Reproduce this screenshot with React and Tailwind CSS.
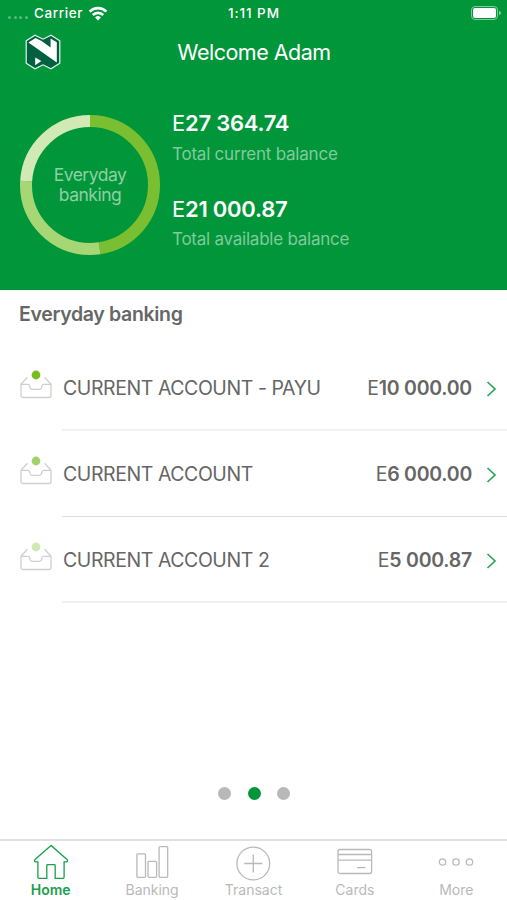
const accounts = [
  { name: "CURRENT ACCOUNT - PAYU", amount: "10 000.00", dot: "#78be20", line: "border-[#f2f2f2] border-b-2 pt-[3px]" },
  { name: "CURRENT ACCOUNT", amount: "6 000.00", dot: "#a1d16c", line: "border-[#dedede] border-b pt-[2px]" },
  { name: "CURRENT ACCOUNT 2", amount: "5 000.87", dot: "#d0e8b2", line: "border-[#f0f0f0] border-b-2 pt-[3px]" },
];

const shares = [
  { color: "#7abf31", start: 0, size: 47.6 },
  { color: "#a7d675", start: 47.6, size: 28.4 },
  { color: "#d1e9b5", start: 76, size: 24 },
];

function Logo() {
  return (
    <svg className="h-9 w-9" viewBox="0 0 36 36" fill="none">
      <path d="M1.2 6.8 10 1.2l8 4 8-4 8.8 5.6v22.4L26 34.8l-8-4-8 4-8.8-5.6Z" fill="#00603f" stroke="#e9f6ee" strokeWidth="1.2" />
      <path d="M3.4 8.4 10.6 4l6 3 9 6.4V4.4l6.2 3.8v20.2L3.4 8.4Z" fill="#fff" />
      <path d="M10.2 23.4 16.4 27l-6.2 4.3Z" fill="#fff" />
    </svg>
  );
}

function Donut() {
  return (
    <div className="relative h-[140px] w-[140px]">
      <svg className="h-full w-full -rotate-90" viewBox="0 0 140 140" fill="none">
        {shares.map((s) => (
          <circle
            key={s.color}
            cx="70"
            cy="70"
            r="64"
            stroke={s.color}
            strokeWidth="12"
            pathLength="100"
            strokeDasharray={`${s.size} ${100 - s.size}`}
            strokeDashoffset={-s.start}
          />
        ))}
      </svg>
      <div className="absolute inset-0 flex items-center justify-center text-center text-[17.5px] leading-[20px] tracking-[-0.5px] text-[#8fd0a5]">
        <span>
          Everyday
          <br />
          banking
        </span>
      </div>
    </div>
  );
}

function TrayIcon({ dot }) {
  return (
    <svg className="h-[30px] w-8" viewBox="0 0 32 30" fill="none">
      <g stroke="#cfcfcf" strokeWidth="1.3" strokeLinejoin="round">
        <path d="M1 15.3h7.2c1.3 0 1.3.5 1.6 2l.3 1.4c.3 1.2.8 1.6 1.9 1.6h7.6c1.1 0 1.6-.4 1.9-1.6l.3-1.4c.3-1.5.5-2 1.6-2H31V26.5a2 2 0 0 1-2 2H3a2 2 0 0 1-2-2Z" />
        <path d="m1 15.3 6.4-7M31 15.3l-6.4-7" />
      </g>
      <circle cx="16" cy="6" r="4.4" fill={dot} />
    </svg>
  );
}

const tabs = [
  {
    label: "Home",
    active: true,
    icon: (
      <path d="M18 1.4 2 15.6c-.9.8-.6 2.3.5 2.3h2.4v15.4c0 .7.4 1 1 1h7.9V21.4c0-.5.2-.8.8-.8h6.8c.6 0 .8.3.8.8v12.9h7.9c.6 0 1-.3 1-1V17.9h2.4c1.1 0 1.4-1.5.5-2.3Z" />
    ),
  },
  {
    label: "Banking",
    icon: (
      <>
        <rect x="2.9" y="9.8" width="8.6" height="23.5" rx="1" />
        <rect x="14" y="17.3" width="8.6" height="16" rx="1" />
        <rect x="25.1" y="2.6" width="8.6" height="30.7" rx="1" />
      </>
    ),
  },
  {
    label: "Transact",
    icon: (
      <>
        <circle cx="18.3" cy="19.5" r="16.4" />
        <path d="M9.2 19.5h18.2M18.3 10.4v18.2" />
      </>
    ),
  },
  {
    label: "Cards",
    icon: (
      <>
        <rect x="1" y="5.5" width="33.6" height="24" rx="2" />
        <path d="M1 10.5h33.6M1 16.2h33.6M20.2 23.6h8.3" />
      </>
    ),
  },
  {
    label: "More",
    icon: (
      <>
        <circle cx="4.5" cy="18" r="3.2" />
        <circle cx="18" cy="18" r="3.2" />
        <circle cx="31.5" cy="18" r="3.2" />
      </>
    ),
  },
];

export default function App() {
  return (
    <div className="flex h-[900px] w-[507px] flex-col overflow-hidden bg-white font-['Inter','Liberation_Sans',sans-serif] text-[#666]">
      <header className="h-[290px] shrink-0 bg-[#009639] text-white">
        {/* Status bar */}
        <div className="grid h-[26px] grid-cols-3 items-center text-[13.5px] font-medium">
          <div className="flex items-center pl-2">
            <div className="flex w-[26px] gap-[2.5px] pt-2">
              <i className="h-[3px] w-[3px] rounded-full bg-[#58ba7b]" />
              <i className="h-[3px] w-[3px] rounded-full bg-[#58ba7b]" />
              <i className="h-[3px] w-[3px] rounded-full bg-[#58ba7b]" />
              <i className="h-[3px] w-[3px] rounded-full bg-[#58ba7b]" />
            </div>
            <span className="tracking-[0.6px]">Carrier</span>
            <svg className="ml-[5px] h-[15px] w-[20px]" viewBox="0 0 20 15" fill="none" stroke="#fff" strokeWidth="2.6">
              <path d="M1.6 5.6a12 12 0 0 1 16.8 0M4.8 9a7.4 7.4 0 0 1 10.4 0" />
              <path d="m10 14.4-2.9-2.9a4.1 4.1 0 0 1 5.8 0Z" fill="#fff" stroke="none" />
            </svg>
          </div>
          <span className="pl-px text-center tracking-[0.9px]">1:11 PM</span>
          <div className="flex items-center justify-end gap-px pr-[6px]">
            <div className="h-[14px] w-[27px] rounded-[4px] border border-[#7fca9b] p-px">
              <div className="h-full rounded-[2px] bg-white" />
            </div>
            <i className="h-1 w-[2px] rounded-r bg-[#7fca9b]" />
          </div>
        </div>

        <div className="grid h-[52px] grid-cols-[1fr_auto_1fr] items-center">
          <div className="pl-[24.5px]">
            <Logo />
          </div>
          <h1 className="pl-px text-[21.5px] tracking-[-0.5px]">Welcome Adam</h1>
        </div>

        <div className="flex gap-[12px] pt-[37px] pl-5">
          <Donut />
          <div className="-mt-[7px]">
            <p className="text-[22px] leading-[31px] font-semibold tracking-[-0.25px]"><span className="font-normal">E</span>27 364.74</p>
            <p className="pt-px text-[17px] leading-7 tracking-[-0.22px] text-[#80cb9c]">Total current balance</p>
            <p className="mt-[26px] text-[22px] leading-[31px] font-semibold tracking-[-0.25px]"><span className="font-normal">E</span>21 000.87</p>
            <p className="text-[17px] leading-7 tracking-[-0.24px] text-[#80cb9c]">Total available balance</p>
          </div>
        </div>
      </header>

      <main className="flex flex-1 flex-col">
        <h2 className="h-[55px] pt-[10px] pl-[19px] text-[19.5px] leading-7 font-semibold tracking-[-0.33px]">Everyday banking</h2>

        {accounts.map((a) => (
          <div key={a.name} className="flex h-[86px] pl-5">
            <div className="w-[42px] pt-6">
              <TrayIcon dot={a.dot} />
            </div>
            <div className={`flex flex-1 items-center pr-[10px] pl-px text-[19.5px] ${a.line}`}>
              <span className="flex-1 tracking-[-0.43px]">{a.name}</span>
              <span className="font-semibold tracking-[-0.25px]"><span className="font-normal">E</span>{a.amount}</span>
              <svg className="ml-[14px] h-4 w-[11px]" viewBox="0 0 11 16" fill="none" stroke="#27a659" strokeWidth="1.7">
                <path d="m1.5 1 7.5 7-7.5 7" />
              </svg>
            </div>
          </div>
        ))}

        <div className="mt-auto mb-[39.5px] flex justify-center gap-[16.5px] pl-px">
          <i className="h-[13px] w-[13px] rounded-full bg-[#b8b8b8]" />
          <i className="h-[13px] w-[13px] rounded-full bg-[#009639]" />
          <i className="h-[13px] w-[13px] rounded-full bg-[#b8b8b8]" />
        </div>
      </main>

      <nav className="grid h-[61px] shrink-0 grid-cols-5 border-t-2 border-[#e0e0e0]">
        {tabs.map((t) => (
          <div key={t.label} className={`flex flex-col items-center pt-[3px] ${t.active ? "text-[#18a04d]" : "text-[#b9b9b9]"}`}>
            <svg className="h-9 w-9 overflow-visible" viewBox="0 0 36 36" fill="none" stroke="currentColor" strokeWidth="1.3">
              {t.icon}
            </svg>
            <span className={`pt-px text-[14px] leading-[18px] ${t.active ? "font-semibold" : "font-normal"}`}>{t.label}</span>
          </div>
        ))}
      </nav>
    </div>
  );
}
